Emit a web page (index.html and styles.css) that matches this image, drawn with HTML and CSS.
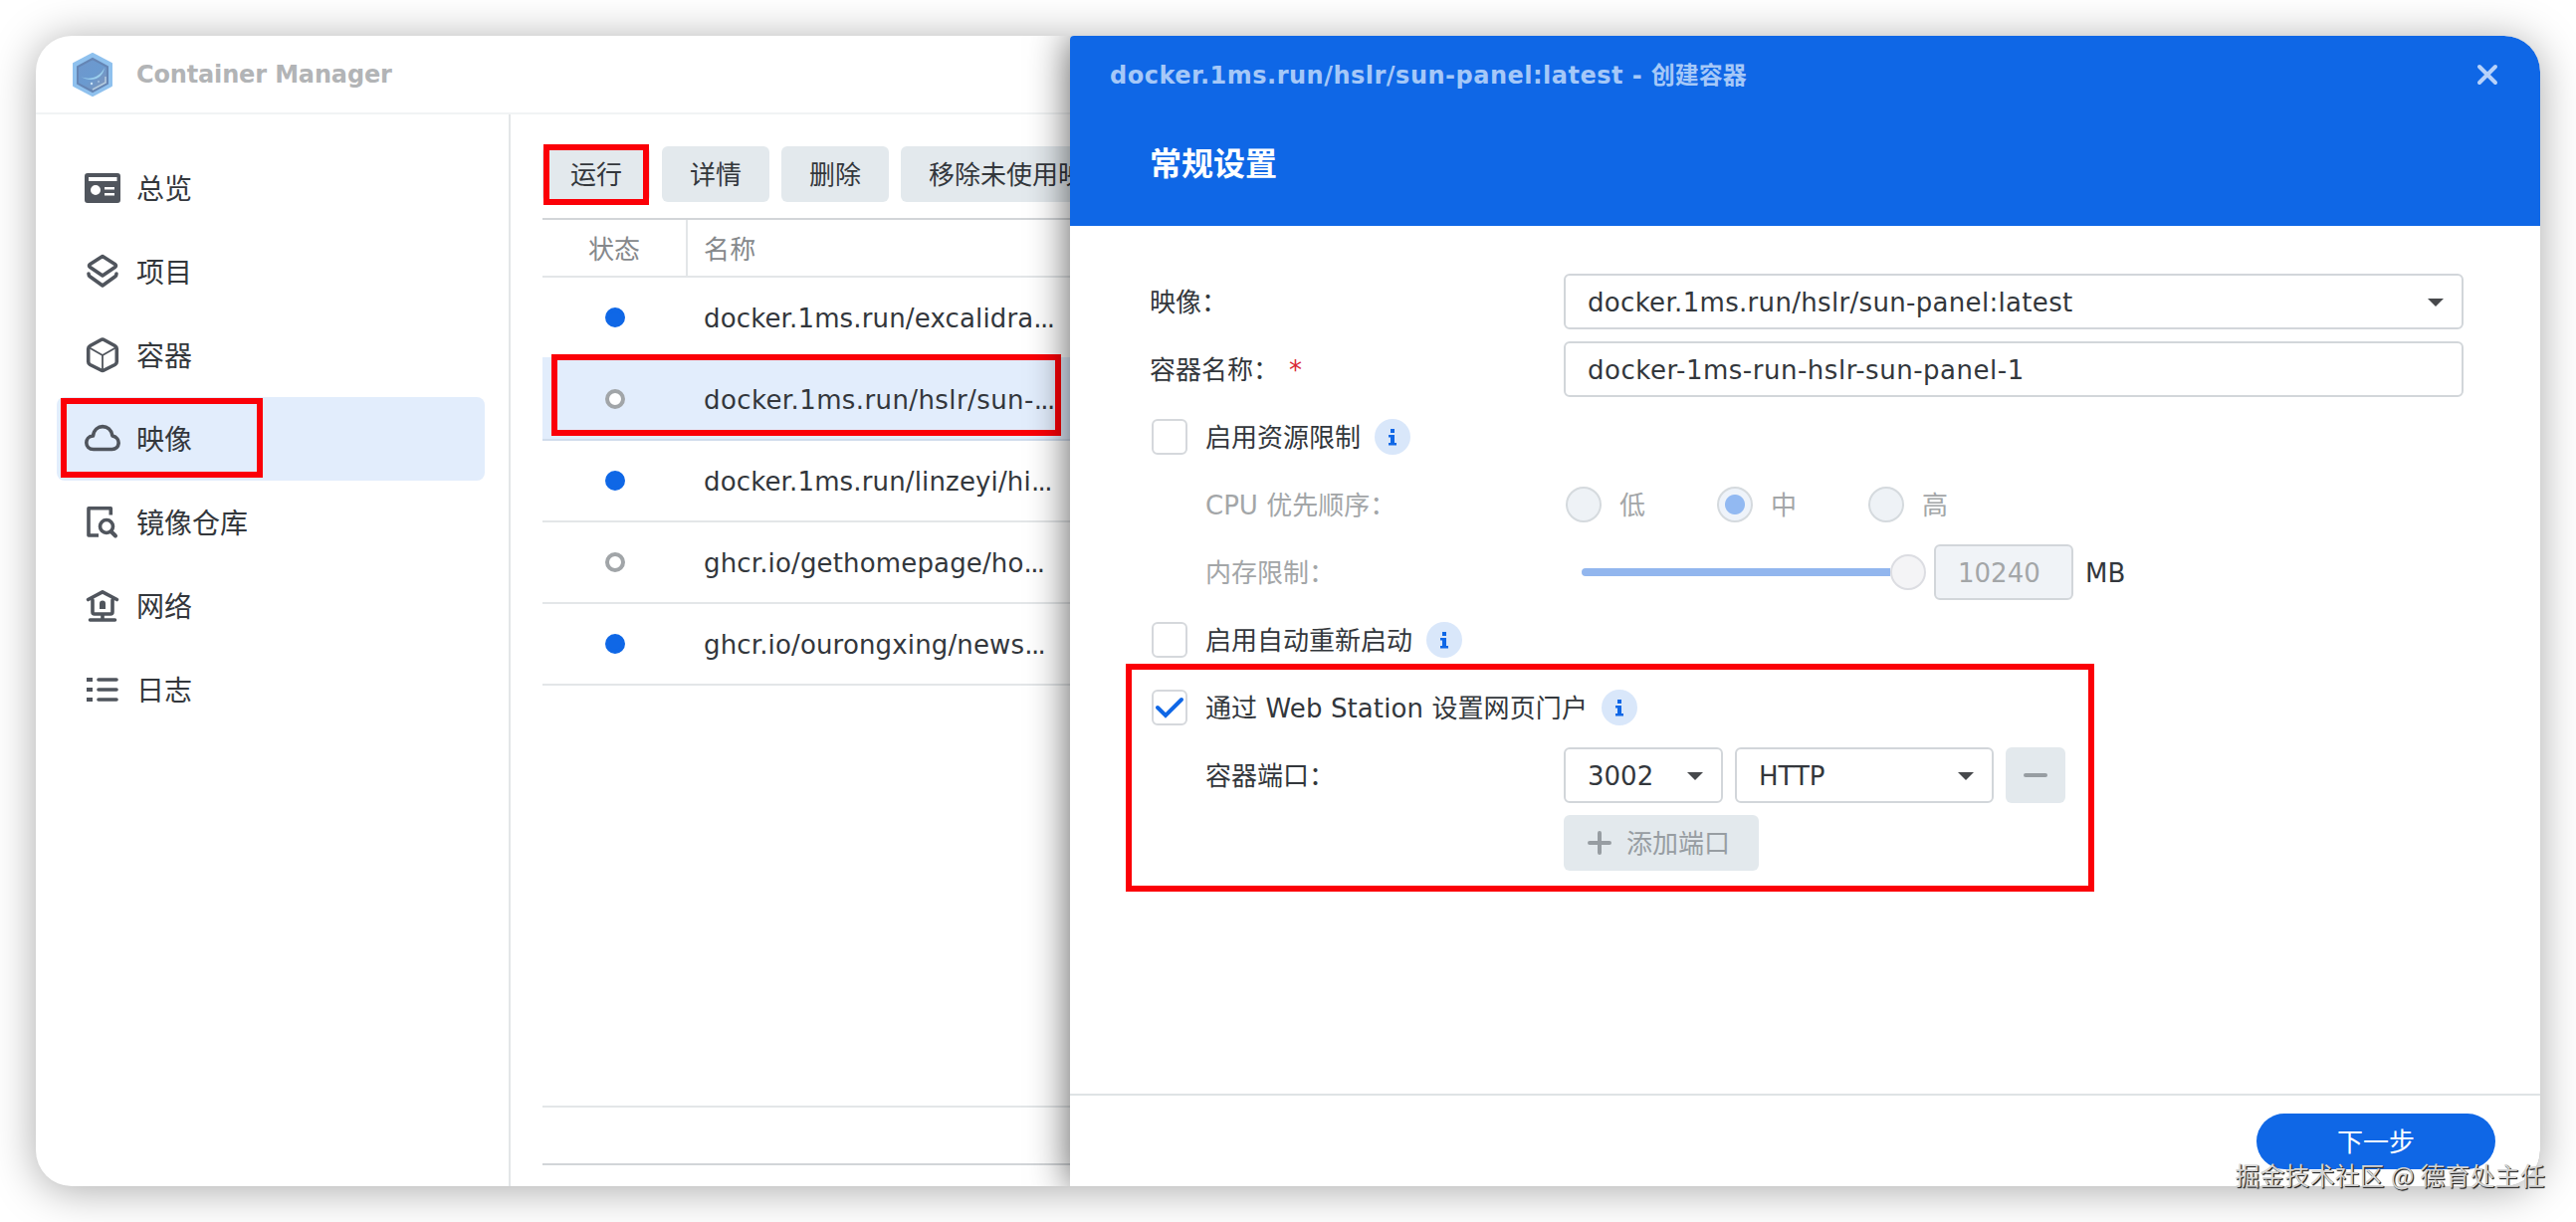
FILE: index.html
```html
<!DOCTYPE html>
<html lang="zh-CN">
<head>
    <meta charset="UTF-8">
    <meta name="viewport" content="width=device-width, initial-scale=1.0">
    <title>Container Manager</title>
    <link rel="stylesheet" href="styles.css">
</head>
<body>

    <div class="window">
        <!-- Title bar -->
        <header class="titlebar">
            <svg class="logo" viewBox="0 0 40 44">
                <defs>
                    <linearGradient id="hexFill" x1="0" y1="0" x2="1" y2="1">
                        <stop offset="0" stop-color="#6f97cc"/>
                        <stop offset="0.5" stop-color="#6a9ad0"/>
                        <stop offset="1" stop-color="#8493b4"/>
                    </linearGradient>
                </defs>
                <path d="M20 1 L39 11 V33 L20 43 L1 33 V11 Z" fill="#8fc1ee" stroke="#8fc1ee" stroke-width="2" stroke-linejoin="round"/>
                <path d="M20 6 L35 14 V31 L20 39 L5 31 V14 Z" fill="url(#hexFill)" stroke="#6585b4" stroke-width="2"/>
                <path d="M8 24 C17 28 27 25 32 15 C30 27 18 30 8 24 Z" fill="#9bd0ee"/>
                <path d="M20 37 L33 30 V24" fill="none" stroke="#b5ccdf" stroke-width="1.500"/>
                <circle cx="19" cy="31" r="1.200" fill="#c9e2f5"/>
                <circle cx="26" cy="29" r="0.800" fill="#c9e2f5"/>
            </svg>
            <h1>Container Manager</h1>
        </header>

        <div class="main">
            <!-- Sidebar -->
            <nav class="sidebar">
                <a class="nav-item">
                    <svg viewBox="0 0 36 36"><path fill="#50555d" fill-rule="evenodd" d="M3 3 H33 Q36 3 36 6 V30 Q36 33 33 33 H3 Q0 33 0 30 V6 Q0 3 3 3 Z M4 7 V11 H32.500 V7 Z M11 15 A5 5 0 1 0 11 25 A5 5 0 1 0 11 15 Z M20 17 V19.400 H30 V17 Z M20 23 V25.400 H30 V23 Z"/></svg>
                    <span>总览</span>
                </a>
                <a class="nav-item">
                    <svg class="line" viewBox="0 0 36 36"><path d="M18 2.500 L30.500 10.500 Q32.500 12 30.500 13.500 L18 22 L5.500 13.500 Q3.500 12 5.500 10.500 Z M4 20 Q4 22 5.500 23 L18 32 L30.500 23 Q32 22 32 20"/></svg>
                    <span>项目</span>
                </a>
                <a class="nav-item">
                    <svg class="line" viewBox="0 0 36 36"><path d="M16.500 2.500 Q18 1.500 19.500 2.500 L30.500 8.500 Q32.300 9.500 32.300 11.500 V24.500 Q32.300 26.500 30.500 27.500 L19.500 33 Q18 34 16.500 33 L5.500 27.500 Q3.700 26.500 3.700 24.500 V11.500 Q3.700 9.500 5.500 8.500 Z"/><path stroke-width="1.800" d="M4 10 L18 18 L32 10 M18 18 V33"/></svg>
                    <span>容器</span>
                </a>
                <a class="nav-item active">
                    <svg class="line" viewBox="0 0 36 36"><path d="M9 28.500 C-0.500 28.500 -0.500 15.500 8.500 15 C10 2.500 26 2.500 28 15 C37 17 35.500 28.500 27.500 28.500 Z"/></svg>
                    <span>映像</span>
                </a>
                <a class="nav-item">
                    <svg class="line square" viewBox="0 0 36 36"><path d="M26.300 10.500 V3.700 H4 V31 H14"/><circle cx="22" cy="22" r="6.500"/><path stroke-width="4" stroke-linecap="round" d="M27 27.500 L31 31.500"/></svg>
                    <span>镜像仓库</span>
                </a>
                <a class="nav-item">
                    <svg class="line" viewBox="0 0 36 36"><path d="M3.500 11.500 L18 3.800 L32.500 11.500 M8 12 V24 Q8 26 10 26 H26 Q28 26 28 24 V12 M18 26 V31 M5.500 32 H30.500"/><path fill="#50555d" stroke="none" d="M15 21 V15.500 Q15 12.500 18 12.500 Q21 12.500 21 15.500 V21 Z"/></svg>
                    <span>网络</span>
                </a>
                <a class="nav-item">
                    <svg class="line" viewBox="0 0 36 36"><path d="M14 8 H32 M14 18 H32 M14 28 H32"/><path fill="#50555d" stroke="none" d="M2 6 H8 V10 H2 Z M2 16 H8 V20 H2 Z M2 26 H8 V30 H2 Z"/></svg>
                    <span>日志</span>
                </a>
            </nav>

            <!-- Image list -->
            <section class="content">
                <div class="toolbar">
                    <button>运行</button>
                    <button>详情</button>
                    <button>删除</button>
                    <button>移除未使用映像</button>
                </div>
                <div class="grid">
                    <div class="grid-head">
                        <div class="col-status">状态</div>
                        <div class="col-name">名称</div>
                    </div>
                    <div class="row">
                        <div class="col-status"><i class="dot on"></i></div>
                        <div class="col-name">docker.1ms.run/excalidra<span class="dots">...</span></div>
                    </div>
                    <div class="row selected">
                        <div class="col-status"><i class="dot"></i></div>
                        <div class="col-name wider">docker.1ms.run/hslr/sun-<span class="dots">...</span></div>
                    </div>
                    <div class="row">
                        <div class="col-status"><i class="dot on"></i></div>
                        <div class="col-name">docker.1ms.run/linzeyi/hi<span class="dots">...</span></div>
                    </div>
                    <div class="row">
                        <div class="col-status"><i class="dot"></i></div>
                        <div class="col-name">ghcr.io/gethomepage/ho<span class="dots">...</span></div>
                    </div>
                    <div class="row">
                        <div class="col-status"><i class="dot on"></i></div>
                        <div class="col-name">ghcr.io/ourongxing/news<span class="dots">...</span></div>
                    </div>
                </div>
                <div class="pager"></div>
            </section>
        </div>

        <!-- Highlight boxes -->
        <div class="mark mark-nav"></div>
        <div class="mark mark-run"></div>
        <div class="mark mark-row"></div>

        <!-- Create container dialog -->
        <div class="dialog">
            <div class="dialog-head">
                <div class="dialog-title">
                    <span><span class="path">docker.1ms.run/hslr/sun-panel:latest -</span> 创建容器</span>
                    <svg class="close" viewBox="0 0 22 22"><path d="M3 3 L19 19 M19 3 L3 19"/></svg>
                </div>
                <h2>常规设置</h2>
            </div>

            <div class="form">
                <div class="field">
                    <label>映像：</label>
                    <div class="input wide"><span class="latin">docker.1ms.run/hslr/sun-panel:latest</span><i class="caret"></i></div>
                </div>
                <div class="field">
                    <label>容器名称：<span class="required">*</span></label>
                    <div class="input wide"><span class="latin name">docker-1ms-run-hslr-sun-panel-1</span></div>
                </div>
                <div class="field">
                    <span class="checkbox"></span>
                    <span class="check-label">启用资源限制</span>
                    <span class="info"><svg viewBox="0 0 36 36"><path d="M16 10 H20 V14 H16 Z M14 16 H20 V24 H22 V26.500 H14 V24 H16 V18.500 H14 Z"/></svg></span>
                </div>
                <div class="field disabled">
                    <label class="indent">CPU 优先顺序：</label>
                    <div class="radios">
                        <span class="radio"></span><span class="radio-label">低</span>
                        <span class="radio checked"></span><span class="radio-label">中</span>
                        <span class="radio"></span><span class="radio-label">高</span>
                    </div>
                </div>
                <div class="field disabled">
                    <label class="indent">内存限制：</label>
                    <div class="slider"><div class="track"></div><div class="thumb"></div></div>
                    <div class="input memory">10240</div>
                    <span class="unit">MB</span>
                </div>
                <div class="field">
                    <span class="checkbox"></span>
                    <span class="check-label">启用自动重新启动</span>
                    <span class="info"><svg viewBox="0 0 36 36"><path d="M16 10 H20 V14 H16 Z M14 16 H20 V24 H22 V26.500 H14 V24 H16 V18.500 H14 Z"/></svg></span>
                </div>
                <div class="field">
                    <span class="checkbox"><svg viewBox="0 0 32 32"><path d="M4 16 L12 24 L28 8"/></svg></span>
                    <span class="check-label portal">通过 Web Station 设置网页门户</span>
                    <span class="info"><svg viewBox="0 0 36 36"><path d="M16 10 H20 V14 H16 Z M14 16 H20 V24 H22 V26.500 H14 V24 H16 V18.500 H14 Z"/></svg></span>
                </div>
                <div class="field">
                    <label class="indent">容器端口：</label>
                    <div class="input port">3002<i class="caret"></i></div>
                    <div class="input protocol">HTTP<i class="caret"></i></div>
                    <button class="remove"><svg viewBox="0 0 24 24"><path d="M2 12 H22"/></svg></button>
                </div>
                <div class="field">
                    <label></label>
                    <button class="add"><svg viewBox="0 0 24 24"><path d="M2 12 H22 M12 2 V22"/></svg><span>添加端口</span></button>
                </div>
            </div>

            <div class="dialog-foot">
                <button class="next">下一步</button>
            </div>

            <div class="mark mark-portal"></div>
        </div>
    </div>

    <div class="watermark">掘金技术社区 @ 德育处主任</div>

</body>
</html>
```
FILE: styles.css
```css
* {
    box-sizing: border-box;
}

body {
    margin: 0;
    padding: 36px;
    height: 1228px;
    overflow: hidden;
    position: relative;
    background: #fff;
    color: #33373c;
    font-family: "DejaVu Sans", "Noto Sans CJK SC", sans-serif;
    font-size: 26px;
    line-height: 36px;
}

h1, h2 {
    margin: 0;
}

button {
    height: 56px;
    padding: 2px 28px 0;
    border: none;
    border-radius: 6px;
    background-color: #e3e9ed;
    color: #33373c;
    font: inherit;
    white-space: nowrap;
}

.window {
    position: relative;
    display: flex;
    flex-direction: column;
    width: 2516px;
    height: 1156px;
    border-radius: 36px;
    background: #fff;
    box-shadow: 0 4px 44px rgba(0, 0, 0, 0.34);
}

/* Title bar */
.titlebar {
    display: flex;
    align-items: center;
    gap: 24px;
    height: 79px;
    padding-left: 37px;
    border-bottom: 2px solid #f1f3f4;
}

.titlebar h1 {
    font-size: 24px;
    line-height: 36px;
    letter-spacing: -0.15px;
    color: #b2b4b6;
}

.logo {
    width: 40px;
    height: 44px;
}

.main {
    display: flex;
    flex: 1;
    min-height: 0;
}

/* Sidebar */
.sidebar {
    width: 477px;
    padding: 32px 24px 0 21px;
    border-right: 2px solid #e3e6e8;
}

.nav-item {
    display: flex;
    align-items: center;
    gap: 16px;
    height: 84px;
    padding-left: 28px;
    border-radius: 8px;
    font-size: 28px;
}

.nav-item.active {
    background-color: #e2edfc;
}

.nav-item span {
    padding-top: 4px;
}

.nav-item svg {
    width: 36px;
    height: 36px;
}

.line {
    fill: none;
    stroke: #50555d;
    stroke-width: 3.6;
    stroke-linecap: round;
    stroke-linejoin: round;
}

.line.square {
    stroke-linecap: butt;
}

/* Image list */
.content {
    display: flex;
    flex-direction: column;
    width: 562px;
    padding: 32px 0 21px 32px;
}

.toolbar {
    display: flex;
    gap: 12px;
}

.grid {
    flex: 1;
    margin-top: 16px;
    border-top: 2px solid #d2d5d8;
}

.grid-head,
.row {
    display: flex;
    align-items: center;
    border-bottom: 2px solid #e3e6e8;
}

.grid-head {
    height: 58px;
    color: #85888b;
}

.grid-head .col-status {
    border-right: 2px solid #e3e6e8;
    height: 56px;
    line-height: 60px;
}

.grid-head .col-name {
    line-height: 60px;
    padding-top: 3px;
}

.row {
    height: 82px;
}

.row:nth-child(2) {
    border-bottom-color: #e2edfc;
}

.row.selected {
    background-color: #e2edfc;
    border-bottom-color: #d0dcec;
}

.col-status {
    width: 146px;
    text-align: center;
}

.col-name {
    padding: 2px 0 0 16px;
    letter-spacing: 0.15px;
    white-space: nowrap;
}

.col-name.wider {
    letter-spacing: 0.4px;
}

.col-name .dots {
    letter-spacing: -1.6px;
}

.dot {
    display: block;
    width: 20px;
    height: 20px;
    margin: 0 auto;
    border: 4px solid #a1a5a8;
    border-radius: 50%;
    background: #fff;
}

.dot.on {
    border-color: #0f67e6;
    background: #0f67e6;
}

.pager {
    height: 60px;
    border-top: 2px solid #e3e6e8;
    border-bottom: 2px solid #d2d5d8;
}

/* Highlight boxes */
.mark {
    position: absolute;
    border: 6px solid #fb0007;
}

.mark-nav {
    left: 25px;
    top: 364px;
    width: 203px;
    height: 80px;
}

.mark-run {
    left: 510px;
    top: 109px;
    width: 106px;
    height: 61px;
}

.mark-row {
    left: 518px;
    top: 320px;
    width: 512px;
    height: 82px;
}

.mark-portal {
    left: 56px;
    top: 631px;
    width: 973px;
    height: 229px;
}

/* Dialog, slides over the list */
.dialog {
    position: absolute;
    top: 0;
    right: 0;
    bottom: 0;
    display: flex;
    flex-direction: column;
    width: 1477px;
    border-radius: 4px 36px 36px 0;
    background: #fff;
    box-shadow: 0 0 40px rgba(0, 0, 0, 0.65);
    clip-path: inset(0 0 0 -60px round 0 36px 36px 0);
}

.dialog-head {
    height: 191px;
    border-radius: 4px 36px 0 0;
    background-color: #0f67e6;
}

.dialog-title {
    display: flex;
    justify-content: space-between;
    align-items: center;
    height: 78px;
    padding: 0 42px 0 40px;
    color: #a5c8f8;
    font-size: 24px;
    font-weight: bold;
}

.dialog-title > span {
    padding-top: 1px;
}

.path {
    letter-spacing: 0.5px;
}

.close {
    width: 22px;
    height: 22px;
    fill: none;
    stroke: #b7d2fa;
    stroke-width: 4;
    stroke-linecap: round;
}

.dialog-head h2 {
    padding: 27px 0 0 80px;
    color: #fff;
    font-size: 32px;
    line-height: 48px;
}

.form {
    display: flex;
    flex: 1;
    flex-direction: column;
    gap: 12px;
    padding: 48px 77px 0 80px;
}

.field {
    display: flex;
    align-items: center;
    height: 56px;
    white-space: nowrap;
}

.field label {
    width: 416px;
    padding-top: 2px;
}

.field label.indent {
    padding-left: 56px;
}

.required {
    margin-left: 10px;
    color: #d92a35;
}

.input {
    display: flex;
    align-items: center;
    justify-content: space-between;
    height: 56px;
    padding: 1px 18px 0 22px;
    border: 2px solid #d2d6da;
    border-radius: 6px;
    background: #fff;
}

.latin {
    letter-spacing: 0.32px;
}

.latin.name {
    letter-spacing: 0.52px;
}

.wide {
    flex: 1;
}

.caret {
    border: 8px solid transparent;
    border-top-color: #47494c;
    border-bottom: 0;
}

.port {
    width: 160px;
}

.protocol {
    width: 260px;
    margin: 0 12px;
}

.checkbox {
    width: 36px;
    height: 36px;
    margin: 0 18px 0 2px;
    border: 2px solid #d5d8dc;
    border-radius: 6px;
}

.checkbox svg {
    display: block;
    fill: none;
    stroke: #0f67e6;
    stroke-width: 4;
    stroke-linecap: round;
}

.check-label {
    padding-top: 2px;
}

.check-label.portal {
    letter-spacing: 0.1px;
}

.info {
    width: 36px;
    height: 36px;
    margin-left: 14px;
    border-radius: 50%;
    background-color: #d9e7fa;
}

.info svg {
    display: block;
    fill: #0f67e6;
}

.disabled {
    color: #a3a6a8;
}

.radios {
    display: flex;
    align-items: center;
    padding-left: 2px;
}

.radio {
    width: 36px;
    height: 36px;
    margin-right: 18px;
    border: 2px solid #d5dade;
    border-radius: 50%;
    background-color: #eef2f6;
}

.radio-label {
    padding-top: 2px;
}

.radio-label + .radio {
    margin-left: 72px;
}

.radio.checked {
    background: radial-gradient(circle, #92b9f2 9.5px, #eef3fa 10.5px);
}

.slider {
    display: flex;
    align-items: center;
    width: 346px;
    margin: 0 8px 0 18px;
}

.track {
    flex: 1;
    height: 8px;
    border-radius: 4px 0 0 4px;
    background-color: #92b6ee;
}

.thumb {
    width: 36px;
    height: 36px;
    border: 2px solid #dcdde2;
    border-radius: 50%;
    background-color: #f4f4f6;
}

.memory {
    width: 140px;
    background-color: #f0f3f7;
}

.unit {
    margin-left: 12px;
    padding-top: 1px;
    color: #33373c;
}

.remove,
.add {
    background-color: #e3e9ed;
    color: #979da2;
}

.remove {
    width: 60px;
    padding: 0 18px;
}

.add {
    display: flex;
    align-items: center;
    gap: 15px;
    width: 196px;
    padding: 0 24px;
}

.add span {
    padding-top: 2px;
}

.remove svg,
.add svg {
    display: block;
    width: 24px;
    height: 24px;
    stroke: #979da2;
    stroke-width: 4;
    stroke-linecap: round;
}

.dialog-foot {
    display: flex;
    justify-content: flex-end;
    height: 93px;
    padding: 18px 45px 0 0;
    border-top: 2px solid #dfe3e5;
}

.next {
    width: 240px;
    border-radius: 28px;
    background-color: #0f67e6;
    color: #fff;
}

.watermark {
    position: absolute;
    right: 31px;
    top: 1162px;
    color: #d4d4d4;
    font-family: "Noto Sans CJK SC", sans-serif;
    font-size: 24.7px;
    letter-spacing: 0.4px;
    text-shadow: 1px 1px 1px #222, 1px 1px 0 #555;
    white-space: nowrap;
}
```
